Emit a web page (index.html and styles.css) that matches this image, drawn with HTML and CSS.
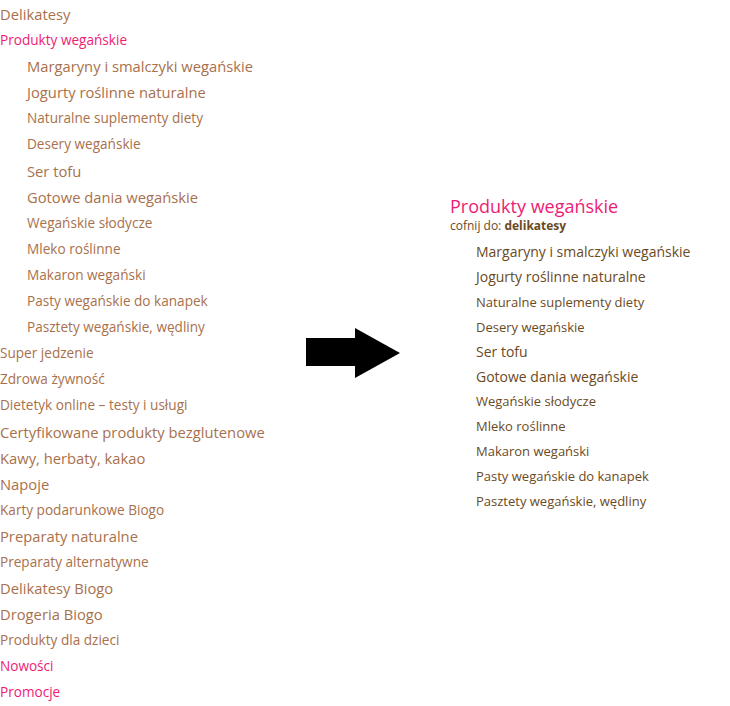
FILE: index.html
```html
<!DOCTYPE html>
<html lang="pl">

<head>
    <meta charset="UTF-8">
    <meta name="viewport" content="width=device-width, initial-scale=1.0">
    <title>Menu kategorii</title>
    <link rel="stylesheet" href="styles.css">
</head>

<body>

    <div class="page">
        <ul class="menu">
            <li class="lg"><a href="#">Delikatesy</a></li>
            <li class="md active"><a href="#">Produkty wegańskie</a></li>
            <li class="lg sub"><a href="#">Margaryny i smalczyki wegańskie</a></li>
            <li class="lg sub"><a href="#">Jogurty roślinne naturalne</a></li>
            <li class="md sub"><a href="#">Naturalne suplementy diety</a></li>
            <li class="md sub"><a href="#">Desery wegańskie</a></li>
            <li class="lg sub"><a href="#">Ser tofu</a></li>
            <li class="lg sub"><a href="#">Gotowe dania wegańskie</a></li>
            <li class="md sub"><a href="#">Wegańskie słodycze</a></li>
            <li class="md sub"><a href="#">Mleko roślinne</a></li>
            <li class="md sub"><a href="#">Makaron wegański</a></li>
            <li class="md sub"><a href="#">Pasty wegańskie do kanapek</a></li>
            <li class="md sub"><a href="#">Pasztety wegańskie, wędliny</a></li>
            <li class="md"><a href="#">Super jedzenie</a></li>
            <li class="md"><a href="#">Zdrowa żywność</a></li>
            <li class="md"><a href="#">Dietetyk online – testy i usługi</a></li>
            <li class="lg"><a href="#">Certyfikowane produkty bezglutenowe</a></li>
            <li class="lg"><a href="#">Kawy, herbaty, kakao</a></li>
            <li class="lg"><a href="#">Napoje</a></li>
            <li class="md"><a href="#">Karty podarunkowe Biogo</a></li>
            <li class="lg"><a href="#">Preparaty naturalne</a></li>
            <li class="md"><a href="#">Preparaty alternatywne</a></li>
            <li class="lg"><a href="#">Delikatesy Biogo</a></li>
            <li class="lg"><a href="#">Drogeria Biogo</a></li>
            <li class="md"><a href="#">Produkty dla dzieci</a></li>
            <li class="md active"><a href="#">Nowości</a></li>
            <li class="md active"><a href="#">Promocje</a></li>
        </ul>

        <div class="arrow">
            <svg width="94" height="50" viewBox="0 0 94 50">
                <polygon points="0,10 49,10 49,0 94,25 49,50 49,38 0,38" fill="#000" />
            </svg>
        </div>

        <div class="panel">
            <h2>Produkty wegańskie</h2>
            <p class="back">cofnij do: <a href="#">delikatesy</a></p>
            <ul class="panel-list">
                <li class="lg"><a href="#">Margaryny i smalczyki wegańskie</a></li>
                <li class="lg"><a href="#">Jogurty roślinne naturalne</a></li>
                <li class="md"><a href="#">Naturalne suplementy diety</a></li>
                <li class="md"><a href="#">Desery wegańskie</a></li>
                <li class="lg"><a href="#">Ser tofu</a></li>
                <li class="lg"><a href="#">Gotowe dania wegańskie</a></li>
                <li class="md"><a href="#">Wegańskie słodycze</a></li>
                <li class="md"><a href="#">Mleko roślinne</a></li>
                <li class="md"><a href="#">Makaron wegański</a></li>
                <li class="md"><a href="#">Pasty wegańskie do kanapek</a></li>
                <li class="md"><a href="#">Pasztety wegańskie, wędliny</a></li>
            </ul>
        </div>
    </div>

</body>

</html>
```

FILE: styles.css
```css
body {
    font-family: 'Open Sans', 'Noto Sans', sans-serif;
    background-color: #fff;
    margin: 0;
    padding: 0;
}

a {
    color: inherit;
    text-decoration: none;
}

ul {
    list-style: none;
    margin: 0;
    padding: 0;
}

.page {
    display: flex;
    align-items: center;
    height: 706px;
}

/* lewa kolumna - pelne menu */
.menu {
    width: 306px;
    padding-top: 1px;
    color: #a8714c;
    align-self: flex-start;
}

.menu li {
    height: 26.1px;
    line-height: 26.1px;
    white-space: nowrap;
}

.menu .lg {
    font-size: 14.75px;
}

.menu .md {
    font-size: 13.6px;
}

.menu .sub {
    padding-left: 27px;
}

.menu .active {
    color: #ee1b74;
}

.arrow {
    width: 94px;
    height: 50px;
    margin-right: 50px;
}

.arrow svg {
    display: block;
}

/* prawa kolumna - podkategorie */
.panel {
    padding-top: 2px;
}

.panel h2 {
    font-size: 18px;
    font-weight: normal;
    color: #ee1b74;
    margin: 0;
    line-height: 24px;
}

.back {
    font-size: 12px;
    color: #6b4a1e;
    margin: 0 0 6px;
    line-height: 16px;
}

.back a {
    font-weight: bold;
}

.panel-list {
    padding-left: 26px;
    color: #6b4a1e;
}

.panel-list li {
    height: 24.9px;
    line-height: 24.9px;
    white-space: nowrap;
}

.panel-list .lg {
    font-size: 14px;
}

.panel-list .md {
    font-size: 13px;
}
```
